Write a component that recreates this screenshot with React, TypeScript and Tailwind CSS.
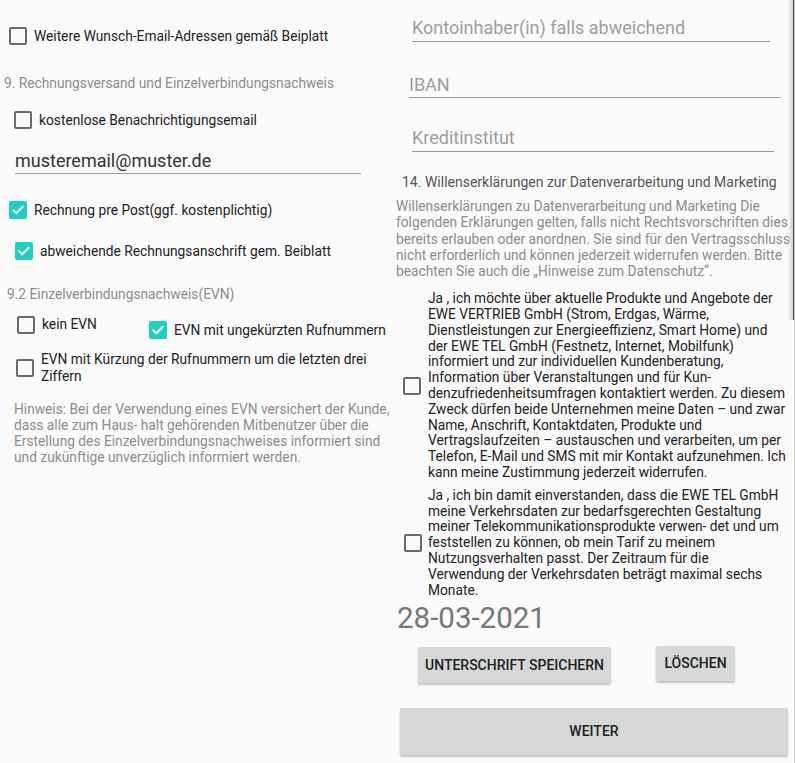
import React from "react";

const FONT = { fontFamily: "Roboto, 'Noto Sans', sans-serif" };

function Box({ checked = false }: { checked?: boolean }) {
  if (checked) {
    return (
      <span className="flex h-[18px] w-[18px] shrink-0 items-center justify-center rounded-[2px] bg-[#1fd0c1]">
        <svg width="14" height="14" viewBox="0 0 14 14" fill="none">
          <path d="M2.3 7.2l3 3 6.4-6.4" stroke="#fff" strokeWidth="2" strokeLinecap="round" strokeLinejoin="round" />
        </svg>
      </span>
    );
  }
  return <span className="block h-[18px] w-[18px] shrink-0 rounded-[2px] border-2 border-[#6b6b6b]" />;
}

const HINWEIS = [
  "Hinweis: Bei der Verwendung eines EVN versichert der Kunde,",
  "dass alle zum Haus- halt gehörenden Mitbenutzer über die",
  "Erstellung des Einzelverbindungsnachweises informiert sind",
  "und zukünftige unverzüglich informiert werden.",
];

const INTRO = [
  "Willenserklärungen zu Datenverarbeitung und Marketing Die",
  "folgenden Erklärungen gelten, falls nicht Rechtsvorschriften dies",
  "bereits erlauben oder anordnen. Sie sind für den Vertragsschluss",
  "nicht erforderlich und können jederzeit widerrufen werden. Bitte",
  "beachten Sie auch die „Hinweise zum Datenschutz“.",
];

const CONSENT_1 = [
  "Ja , ich möchte über aktuelle Produkte und Angebote der",
  "EWE VERTRIEB GmbH (Strom, Erdgas, Wärme,",
  "Dienstleistungen zur Energieeffizienz, Smart Home) und",
  "der EWE TEL GmbH (Festnetz, Internet, Mobilfunk)",
  "informiert und zur individuellen Kundenberatung,",
  "Information über Veranstaltungen und für Kun-",
  "denzufriedenheitsumfragen kontaktiert werden. Zu diesem",
  "Zweck dürfen beide Unternehmen meine Daten – und zwar",
  "Name, Anschrift, Kontaktdaten, Produkte und",
  "Vertragslaufzeiten – austauschen und verarbeiten, um per",
  "Telefon, E-Mail und SMS mit mir Kontakt aufzunehmen. Ich",
  "kann meine Zustimmung jederzeit widerrufen.",
];

const CONSENT_2 = [
  "Ja , ich bin damit einverstanden, dass die EWE TEL GmbH",
  "meine Verkehrsdaten zur bedarfsgerechten Gestaltung",
  "meiner Telekommunikationsprodukte verwen- det und um",
  "feststellen zu können, ob mein Tarif zu meinem",
  "Nutzungsverhalten passt. Der Zeitraum für die",
  "Verwendung der Verkehrsdaten beträgt maximal sechs",
  "Monate.",
];

function Lines({ lines }: { lines: string[] }) {
  return (
    <>
      {lines.map((l) => (
        <span key={l} className="block whitespace-nowrap">
          {l}
        </span>
      ))}
    </>
  );
}

export default function App() {
  return (
    <div className="relative min-h-[763px] w-full overflow-hidden bg-[#fafafa] text-[#222]" style={FONT}>
      <div className="flex">
        {/* Left column */}
        <div className="flex w-[395px] shrink-0 flex-col">
          <label className="ml-[9px] mt-[27px] flex items-center gap-[7px] text-[13.75px] leading-[18px]">
            <Box />
            <span>Weitere Wunsch-Email-Adressen gemäß Beiplatt</span>
          </label>

          <div className="ml-[4px] mt-[30px] text-[13.75px] leading-[16px] text-[#8c8c8c]">
            9. Rechnungsversand und Einzelverbindungsnachweis
          </div>

          <label className="ml-[14px] mt-[20px] flex items-center gap-[7px] text-[13.75px] leading-[18px]">
            <Box />
            <span>kostenlose Benachrichtigungsemail</span>
          </label>

          <div className="ml-[15px] mt-[21px] w-[346px] border-b border-[#9a9a9a] pb-[1px] text-[18px] leading-[22px] text-[#333]">
            musteremail@muster.de
          </div>

          <label className="ml-[9px] mt-[27px] flex items-center gap-[7px] text-[13.75px] leading-[18px]">
            <Box checked />
            <span>Rechnung pre Post(ggf. kostenplichtig)</span>
          </label>

          <label className="ml-[15px] mt-[23px] flex items-center gap-[7px] text-[13.75px] leading-[18px]">
            <Box checked />
            <span>abweichende Rechnungsanschrift gem. Beiblatt</span>
          </label>

          <div className="ml-[7px] mt-[26px] text-[13.75px] leading-[16px] text-[#8c8c8c]">
            9.2 Einzelverbindungsnachweis(EVN)
          </div>

          <div className="ml-[17px] mt-[14px] flex items-start">
            <label className="flex w-[132px] items-start gap-[7px] text-[13.75px]">
              <Box />
              <span className="leading-[16px]">kein EVN</span>
            </label>
            <label className="mt-[5px] flex items-center gap-[7px] text-[13.75px] leading-[18px]">
              <Box checked />
              <span>EVN mit ungekürzten Rufnummern</span>
            </label>
          </div>

          <label className="ml-[16px] mt-[12px] flex items-center gap-[7px] text-[13.75px] leading-[17px]">
            <Box />
            <span>
              EVN mit Kürzung der Rufnummern um die letzten drei
              <br />
              Ziffern
            </span>
          </label>

          <p className="ml-[14px] mt-[16px] text-[13.75px] leading-[16px] text-[#8c8c8c]">
            <Lines lines={HINWEIS} />
          </p>
        </div>

        {/* Right column */}
        <div className="flex min-w-0 flex-1 flex-col">
          <div className="ml-[17px] mt-[17px] w-[358px] border-b border-[#9a9a9a] pb-[2px] text-[18px] leading-[22px] text-[#9e9e9e]">
            Kontoinhaber(in) falls abweichend
          </div>
          <div className="ml-[14px] mt-[32px] w-[372px] border-b border-[#9a9a9a] pb-[1px] text-[18px] leading-[22px] text-[#9e9e9e]">
            IBAN
          </div>
          <div className="ml-[17px] mt-[29px] w-[362px] border-b border-[#9a9a9a] pb-[2px] text-[18px] leading-[22px] text-[#9e9e9e]">
            Kreditinstitut
          </div>

          <div className="ml-[7px] mt-[22px] text-[14px] leading-[16px] text-[#555]">
            14. Willenserklärungen zur Datenverarbeitung und Marketing
          </div>

          <p className="ml-[1px] mt-[8px] text-[13.75px] leading-[16.25px] text-[#8c8c8c]">
            <Lines lines={INTRO} />
          </p>

          <label className="ml-[8px] mt-[12px] flex items-center gap-[7px] text-[13.75px] leading-[15.8px]">
            <Box />
            <span>
              <Lines lines={CONSENT_1} />
            </span>
          </label>

          <label className="ml-[9px] mt-[7px] flex items-center gap-[6px] text-[13.75px] leading-[15.8px]">
            <Box />
            <span>
              <Lines lines={CONSENT_2} />
            </span>
          </label>

          <div className="ml-[2px] mt-[4px] text-[29.5px] leading-[32px] text-[#777]">28-03-2021</div>

          <div className="ml-[23px] mt-[12px] flex items-start">
            <button className="mt-[1px] h-[36px] w-[193px] rounded-[2px] bg-[#d6d7d7] text-[14px] font-medium text-[#222] shadow-[0_2px_2px_rgba(0,0,0,0.22)]">
              UNTERSCHRIFT SPEICHERN
            </button>
            <button className="ml-[45px] h-[35px] w-[79px] rounded-[2px] bg-[#d6d7d7] text-[14px] font-medium text-[#222] shadow-[0_2px_2px_rgba(0,0,0,0.22)]">
              LÖSCHEN
            </button>
          </div>

          <button className="ml-[5px] mt-[25px] h-[47px] w-[388px] rounded-[2px] bg-[#d6d7d7] text-[14px] font-medium text-[#222] shadow-[0_2px_2px_rgba(0,0,0,0.22)]">
            WEITER
          </button>
        </div>
      </div>

      {/* scroll edge */}
      <div className="absolute right-[1px] top-0 h-[320px] w-[6px] border-r border-[#555] bg-gradient-to-r from-transparent to-[#cfcfcf]" />
      <div className="absolute bottom-0 right-0 top-0 w-px bg-[#c8c8c8]" />
    </div>
  );
}
